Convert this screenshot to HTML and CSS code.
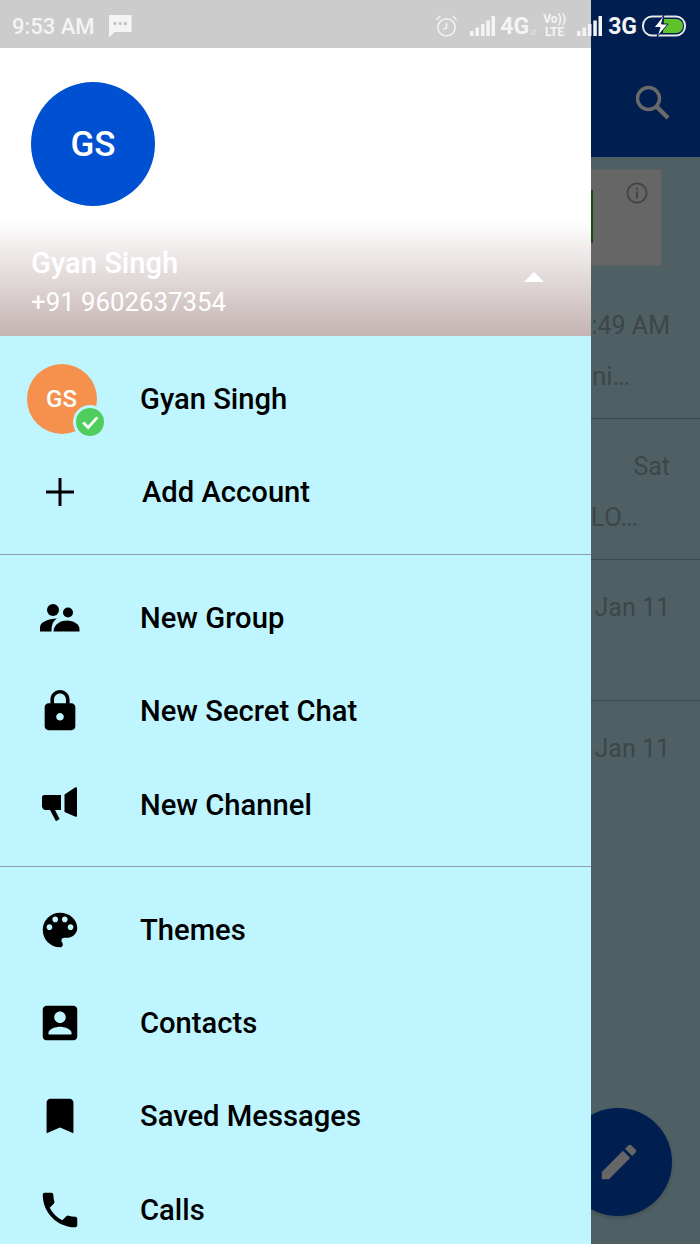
FILE: index.html
```html
<!DOCTYPE html>
<html lang="en">
<head>
    <meta charset="UTF-8">
    <meta name="viewport" content="width=device-width, initial-scale=1.0">
    <title>Gyan Singh</title>
    <link rel="stylesheet" href="styles.css">
</head>
<body>
    <div class="screen">
        <!-- chat list, dimmed behind the drawer -->
        <div class="chats">
            <div class="appbar">
                <svg class="search-icon" viewBox="0 0 36 36" width="36" height="36">
                    <circle cx="13.5" cy="13.5" r="11" fill="none" stroke="#6a6a6a" stroke-width="3.4"/>
                    <path d="M21.5 21.5 L33 33" stroke="#6a6a6a" stroke-width="4.4" fill="none"/>
                </svg>
            </div>
            <div class="promo">
                <div class="promo-thumb"></div>
                <svg class="info-icon" viewBox="0 0 22 22" width="22" height="22">
                    <circle cx="11" cy="11" r="9.6" fill="none" stroke="#3f4546" stroke-width="1.8"/>
                    <rect x="10" y="9.4" width="2" height="7" fill="#3f4546"/>
                    <rect x="10" y="5.6" width="2" height="2.2" fill="#3f4546"/>
                </svg>
            </div>
            <div class="chat-row">
                <div class="chat-time">9:49 AM</div>
                <div class="chat-preview first">Family mini…</div>
            </div>
            <div class="chat-row">
                <div class="chat-time">Sat</div>
                <div class="chat-preview">HELLO…</div>
            </div>
            <div class="chat-row">
                <div class="chat-time">Jan 11</div>
            </div>
            <div class="chat-row no-line">
                <div class="chat-time">Jan 11</div>
            </div>
            <div class="fab">
                <svg viewBox="0 0 24 24" width="46" height="46">
                    <path fill="#666" d="M3 17.25V21h3.75L17.81 9.94l-3.75-3.75L3 17.25zM20.71 7.04a1 1 0 0 0 0-1.41l-2.34-2.34a1 1 0 0 0-1.41 0l-1.83 1.83 3.75 3.75 1.83-1.83z"/>
                </svg>
            </div>
        </div>

        <div class="drawer">
            <div class="drawer-top">
                <div class="avatar-big">GS</div>
                <div class="user-line">
                    <div>
                        <div class="user-name">Gyan Singh</div>
                        <div class="user-phone">+91 9602637354</div>
                    </div>
                    <div class="arrow-up"></div>
                </div>
            </div>

            <div class="section first-section">
                <div class="row">
                    <div class="row-icon">
                        <div class="avatar-small">GS
                            <span class="badge">
                                <svg viewBox="0 0 24 24" width="22" height="22"><path d="M4.5 12.5 L10 18 L20 7" fill="none" stroke="#fff" stroke-width="3"/></svg>
                            </span>
                        </div>
                    </div>
                    <span>Gyan Singh</span>
                </div>
                <div class="row add-row">
                    <div class="row-icon">
                        <svg viewBox="0 0 28 28" width="28" height="28"><path d="M12.500 0h3v12.500H28v3H15.500V28h-3V15.500H0v-3h12.500z"/></svg>
                    </div>
                    <span>Add Account</span>
                </div>
            </div>

            <div class="section">
                <div class="row">
                    <div class="row-icon">
                        <svg viewBox="0 0 40 28" width="40" height="28">
                            <circle cx="13" cy="6" r="6"/>
                            <circle cx="28" cy="8.5" r="5"/>
                            <path d="M0 27.5v-4C0 18 8 15 17 14.5 13 17 11.5 21 11.5 27.5z"/>
                            <path d="M13.5 27.5C13.5 19.5 22 16.5 27 16.5c6 0 12.5 3.5 12.5 8.5v2.5z"/>
                        </svg>
                    </div>
                    <span>New Group</span>
                </div>
                <div class="row">
                    <div class="row-icon">
                        <svg viewBox="0 0 24 24" width="46" height="46">
                            <path d="M18 8h-1V6c0-2.76-2.24-5-5-5S7 3.24 7 6v2H6c-1.1 0-2 .9-2 2v10c0 1.1.9 2 2 2h12c1.1 0 2-.9 2-2V10c0-1.1-.9-2-2-2zm-6 9c-1.1 0-2-.9-2-2s.9-2 2-2 2 .9 2 2-.9 2-2 2zm3.1-9H8.9V6c0-1.71 1.39-3.1 3.1-3.1 1.71 0 3.1 1.39 3.1 3.1v2z"/>
                        </svg>
                    </div>
                    <span>New Secret Chat</span>
                </div>
                <div class="row">
                    <div class="row-icon">
                        <svg viewBox="0 0 36 35" width="36" height="35">
                            <path d="M2 8h17v15h-6l4.6 9-3.6 2.2L8 23H3c-1.5-.4-3-2-3-3.500V10c0-1 1-2 2-2z"/>
                            <path d="M22.500 7.500 33 .5c1-.7 2-.2 2 1v27c0 1.200-1 1.700-2 1L22.500 25z"/>
                        </svg>
                    </div>
                    <span>New Channel</span>
                </div>
            </div>

            <div class="section no-line">
                <div class="row">
                    <div class="row-icon">
                        <svg viewBox="0 0 24 24" width="46" height="46">
                            <path d="M12 3c-4.970 0-9 4.030-9 9s4.030 9 9 9c.83 0 1.500-.67 1.500-1.500 0-.39-.15-.74-.39-1.010-.23-.26-.38-.61-.38-.99 0-.83.67-1.500 1.500-1.500H16c2.760 0 5-2.240 5-5 0-4.420-4.030-8-9-8zm-5.500 9c-.83 0-1.500-.67-1.500-1.500S5.670 9 6.500 9 8 9.670 8 10.500 7.330 12 6.500 12zm3-4C8.670 8 8 7.330 8 6.500S8.670 5 9.500 5s1.500.67 1.500 1.500S10.330 8 9.500 8zm5 0c-.83 0-1.500-.67-1.500-1.500S13.670 5 14.500 5s1.500.67 1.500 1.500S15.330 8 14.500 8zm3 4c-.83 0-1.500-.67-1.500-1.500S16.670 9 17.500 9s1.500.67 1.500 1.500-.67 1.500-1.500 1.500z"/>
                        </svg>
                    </div>
                    <span>Themes</span>
                </div>
                <div class="row">
                    <div class="row-icon">
                        <svg viewBox="0 0 24 24" width="46" height="46">
                            <path d="M3 5v14c0 1.100.89 2 2 2h14c1.100 0 2-.9 2-2V5c0-1.100-.9-2-2-2H5c-1.110 0-2 .9-2 2zm12 4c0 1.660-1.340 3-3 3s-3-1.340-3-3 1.340-3 3-3 3 1.340 3 3zm-9 8c0-2 4-3.100 6-3.100s6 1.100 6 3.100v1H6v-1z"/>
                        </svg>
                    </div>
                    <span>Contacts</span>
                </div>
                <div class="row">
                    <div class="row-icon">
                        <svg viewBox="0 0 24 24" width="46" height="46">
                            <path d="M17 3H7c-1.100 0-1.990.9-1.990 2L5 21l7-3 7 3V5c0-1.100-.9-2-2-2z"/>
                        </svg>
                    </div>
                    <span>Saved Messages</span>
                </div>
                <div class="row">
                    <div class="row-icon">
                        <svg viewBox="0 0 24 24" width="46" height="46">
                            <path d="M6.620 10.790c1.440 2.830 3.760 5.140 6.590 6.590l2.200-2.200c.27-.27.67-.36 1.020-.24 1.120.37 2.330.57 3.570.57.55 0 1 .45 1 1V20c0 .55-.45 1-1 1-9.390 0-17-7.610-17-17 0-.55.45-1 1-1h3.500c.55 0 1 .45 1 1 0 1.250.2 2.450.57 3.570.11.35.03.74-.25 1.020l-2.200 2.200z"/>
                        </svg>
                    </div>
                    <span>Calls</span>
                </div>
            </div>
        </div>

        <!-- status bar sits on top of both the drawer and the chats -->
        <div class="statusbar">
            <div class="status-left">
                <span class="clock">9:53 AM</span>
                <svg viewBox="0 0 24 24" width="24" height="24">
                    <path fill="#f4f4f4" d="M1 1h22.500v17H6.500L1 23.500z"/>
                    <circle cx="7" cy="9.500" r="1.700" fill="#c4c4c4"/>
                    <circle cx="12.200" cy="9.500" r="1.700" fill="#c4c4c4"/>
                    <circle cx="17.400" cy="9.500" r="1.700" fill="#c4c4c4"/>
                </svg>
            </div>
            <div class="status-right">
                <svg class="alarm" viewBox="0 0 24 24" width="23" height="24" fill="none" stroke="#f4f4f4" stroke-width="1.600">
                    <circle cx="12" cy="13.500" r="9"/>
                    <path d="M12 8.500v5.500l-3.500 1.500M1.500 5.500 5.500 1.500M22.500 5.500 18.500 1.500"/>
                </svg>
                <svg class="signal" viewBox="0 0 25 20" width="25" height="20">
                    <path fill="#f4f4f4" d="M0 15h3.500v5H0zM5.500 11.500h3.500V20H5.500zM11 8h3.500v12H11zM16.300 4.500h3.500V20h-3.500zM21.500 0H25v20h-3.500z"/>
                </svg>
                <span class="net net-4g">4G</span>
                <span class="arrows">↓↑</span>
                <span class="volte"><span>Vo))</span><span>LTE</span></span>
                <svg class="signal signal-2" viewBox="0 0 25 20" width="25" height="20">
                    <path fill="#f4f4f4" d="M0 15h3.500v5H0zM5.500 11.500h3.500V20H5.500zM11 8h3.500v12H11zM16.300 4.500h3.500V20h-3.500zM21.500 0H25v20h-3.500z"/>
                </svg>
                <span class="net net-3g">3G</span>
                <svg class="battery" viewBox="0 0 46 22" width="46" height="22">
                    <rect x="1" y="1.500" width="42" height="19" rx="9" fill="none" stroke="#e8e8e8" stroke-width="2"/>
                    <path fill="#5ec22a" d="M22 4h12c4 0 7 3 7 7s-3 7-7 7H21z"/>
                    <path fill="#fff" stroke="#001f50" stroke-width="1" d="M22 0 12 12.500h6L15 22l11-13h-6.500z"/>
                </svg>
            </div>
        </div>
    </div>
</body>
</html>
```

FILE: styles.css
```css
html, body {
    margin: 0;
    padding: 0;
}
body {
    font-family: Roboto, "Liberation Sans", sans-serif;
    color: #000;
}
.screen {
    position: relative;
    width: 700px;
    height: 1244px;
    overflow: hidden;
    background-color: #4f6064;
}

/* dimmed chats */
.chats {
    height: 100%;
}
.appbar {
    height: 157px;
    background-color: #001f50;
    display: flex;
    justify-content: flex-end;
    align-items: flex-start;
}
.search-icon {
    margin: 85px 29px 0 0;
}
.promo {
    height: 95px;
    margin: 13px 39px 13px 0;
    background-color: #666;
    box-shadow: 0 0 0 1px #5c6060;
    display: flex;
    justify-content: space-between;
    align-items: flex-start;
}
.promo-thumb {
    width: 593px;
    height: 53px;
    margin-top: 20px;
    background-color: #174a10;
}
.info-icon {
    margin: 12px 13px 0 0;
}
.chat-row {
    height: 140px;
    border-bottom: 1px solid #3c484b;
    color: #3c4648;
    text-align: right;
}
.chat-row.no-line {
    border-bottom: none;
}
.chat-time {
    font-size: 25px;
    padding: 28px 30px 0 0;
    line-height: 40px;
}
.chat-preview {
    font-size: 26px;
    line-height: 40px;
    padding: 10px 62px 0 0;
}
.chat-preview.first {
    padding-right: 70px;
}
.fab {
    position: absolute;
    left: 564px;
    top: 1108px;
    width: 108px;
    height: 108px;
    border-radius: 50%;
    background-color: #001f50;
    box-shadow: 0 2px 4px rgba(0,0,0,0.2);
    display: flex;
    align-items: center;
    justify-content: center;
}
.fab svg {
    margin-left: 2px;
}

/* drawer */
.drawer {
    position: absolute;
    left: 0;
    top: 0;
    width: 591px;
    height: 1244px;
    overflow: hidden;
    background-color: #bff5ff;
}
.drawer-top {
    height: 336px;
    box-sizing: border-box;
    padding: 82px 47px 0 31px;
    background: linear-gradient(to bottom, #fff 0, #fff 220px, #c4b4b3 336px);
}
.avatar-big {
    width: 124px;
    height: 124px;
    border-radius: 50%;
    background-color: #0050d2;
    color: #fff;
    font-size: 35px;
    font-weight: 500;
    display: flex;
    align-items: center;
    justify-content: center;
}
.user-line {
    display: flex;
    justify-content: space-between;
    align-items: center;
    margin-top: 37px;
    color: #fff;
}
.user-name {
    font-size: 29.2px;
    font-weight: 500;
    line-height: 40px;
}
.user-phone {
    font-size: 25.8px;
    line-height: 38px;
}
.arrow-up {
    width: 0;
    height: 0;
    border-left: 10px solid transparent;
    border-right: 10px solid transparent;
    border-bottom: 10px solid #fff;
    margin-bottom: 10px;
}
.section {
    padding: 16.5px 0 15px;
    border-bottom: 1px solid #8c9ea2;
}
.section.no-line {
    border-bottom: none;
    padding-top: 16px;
}
.row {
    height: 93.25px;
    display: flex;
    align-items: center;
    font-size: 29.2px;
    font-weight: 500;
}
.row-icon {
    width: 140px;
    flex: none;
    padding-right: 21px;
    box-sizing: border-box;
    display: flex;
    justify-content: center;
    align-items: center;
}
.row-icon svg {
    display: block;
}
.add-row .row-icon {
    width: 142px;
    padding-right: 22px;
}
.avatar-small {
    position: relative;
    width: 70px;
    height: 70px;
    margin-left: 4px;
    border-radius: 50%;
    background-color: #f5914d;
    color: #fff;
    font-size: 24px;
    font-weight: 500;
    display: flex;
    align-items: center;
    justify-content: center;
}
.badge {
    position: absolute;
    left: 46px;
    top: 41px;
    width: 28px;
    height: 28px;
    border: 3px solid #bff5ff;
    border-radius: 50%;
    background-color: #4fce5d;
    display: flex;
    align-items: center;
    justify-content: center;
}

/* status bar */
.statusbar {
    position: absolute;
    left: 0;
    top: 0;
    width: 700px;
    height: 48px;
    box-sizing: border-box;
    padding: 4px 12px 0;
    display: flex;
    justify-content: space-between;
    align-items: center;
    color: #f4f4f4;
    background: linear-gradient(to right, #ccc 591px, transparent 591px);
}
.status-left {
    display: flex;
    align-items: center;
    gap: 13px;
}
.clock {
    font-size: 22px;
    font-weight: 500;
}
.status-right {
    display: flex;
    align-items: center;
}
.signal {
    margin-left: 12px;
}
.signal-2 {
    margin-left: 11px;
}
.net {
    font-size: 23px;
    font-weight: 700;
    margin-left: 6px;
}
.net-4g {
    margin-left: 5px;
}
.arrows {
    font-size: 10px;
    width: 9px;
    margin-top: 10px;
    letter-spacing: -2px;
}
.volte {
    display: flex;
    flex-direction: column;
    align-items: center;
    font-size: 12px;
    font-weight: 700;
    line-height: 13px;
    margin-left: 5px;
    width: 23px;
}
.battery {
    margin-left: 5px;
}
```
